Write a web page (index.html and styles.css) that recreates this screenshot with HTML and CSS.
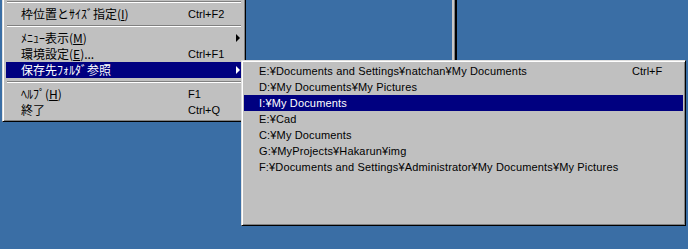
FILE: index.html
```html
<!DOCTYPE html>
<html lang="ja">
<head>
  <meta charset="UTF-8" />
  <meta name="viewport" content="width=device-width,initial-scale=1.0" />
  <title>Menu</title>
  <link rel="stylesheet" href="styles.css">
</head>
<body>
  <div class="desk">
    <div class="edge"></div>

    <div class="menu main">
      <div class="sep"></div>
      <div class="item"><span class="label jp">枠位置とｻｲｽﾞ指定(<u>I</u>)</span><span class="key">Ctrl+F2</span></div>
      <div class="sep"></div>
      <div class="item"><span class="label jp">ﾒﾆｭｰ表示(<u>M</u>)</span><span class="key"></span><i class="arrow"></i></div>
      <div class="item"><span class="label jp">環境設定(<u>E</u>)...</span><span class="key">Ctrl+F1</span></div>
      <div class="item on"><span class="label jp">保存先ﾌｫﾙﾀﾞ参照</span><span class="key"></span><i class="arrow"></i></div>
      <div class="sep"></div>
      <div class="item"><span class="label jp">ﾍﾙﾌﾟ(<u>H</u>)</span><span class="key">F1</span></div>
      <div class="item"><span class="label jp">終了</span><span class="key">Ctrl+Q</span></div>
    </div>

    <div class="menu sub">
      <div class="item"><span class="label">E:¥Documents and Settings¥natchan¥My Documents</span><span class="key">Ctrl+F</span></div>
      <div class="item"><span class="label">D:¥My Documents¥My Pictures</span></div>
      <div class="item on"><span class="label">I:¥My Documents</span></div>
      <div class="item"><span class="label">E:¥Cad</span></div>
      <div class="item"><span class="label">C:¥My Documents</span></div>
      <div class="item"><span class="label">G:¥MyProjects¥Hakarun¥img</span></div>
      <div class="item"><span class="label">F:¥Documents and Settings¥Administrator¥My Documents¥My Pictures</span></div>
    </div>
  </div>
</body>
</html>
```

FILE: styles.css
```css
body {
  margin: 0;
  background: #3a6ea5;
  font-family: "Liberation Sans", "Noto Sans CJK JP", sans-serif;
  font-size: 11px;
  color: #000;
}
.desk {
  position: relative;
  width: 688px;
  height: 249px;
  overflow: hidden;
}
/* edge of a window behind the menus */
.edge {
  position: absolute;
  left: 452px;
  top: 0;
  width: 2px;
  height: 80px;
  background: #c8c8c8;
  border-right: 1px solid #808080;
  box-shadow: 1px 0 #000, 2px 0 #000;
}
.menu {
  position: absolute;
  background: #c0c0c0;
  border: 1px solid;
  border-color: #dfdfdf #000 #000 #dfdfdf;
  box-shadow: inset 1px 1px #fff, inset -1px -1px #808080;
}
.main {
  left: 2px;
  top: -6px;
  width: 236px;
  padding: 3px 3px 3px 3px;
  z-index: 1;
}
.sub {
  left: 241px;
  top: 60px;
  width: 439px;
  height: 160px;
  padding: 2px;
  z-index: 2;
}
.item {
  display: flex;
  align-items: center;
  box-sizing: border-box;
  height: 16px;
  padding: 0 0 1px 15px;
  white-space: nowrap;
}
.item.on {
  background: #000080;
  color: #fff;
}
.label { flex: none; }
.main .label { width: 167px; }
.sub .label { width: 373px; letter-spacing: 0.15px; }
.jp { font-family: "Noto Sans CJK JP", sans-serif; font-size: 12px; }
.key { flex: 1; }
.arrow {
  width: 0;
  height: 0;
  margin: 1px 2px 0 0;
  border-left: 4px solid #000;
  border-top: 4px solid transparent;
  border-bottom: 4px solid transparent;
}
.on .arrow { border-left-color: #fff; }
.sep {
  height: 8px;
  position: relative;
}
.sep::before {
  content: "";
  position: absolute;
  left: 1px;
  right: 1px;
  top: 3px;
  border-top: 1px solid #808080;
  border-bottom: 1px solid #fff;
}
u { text-decoration: underline; }
```
